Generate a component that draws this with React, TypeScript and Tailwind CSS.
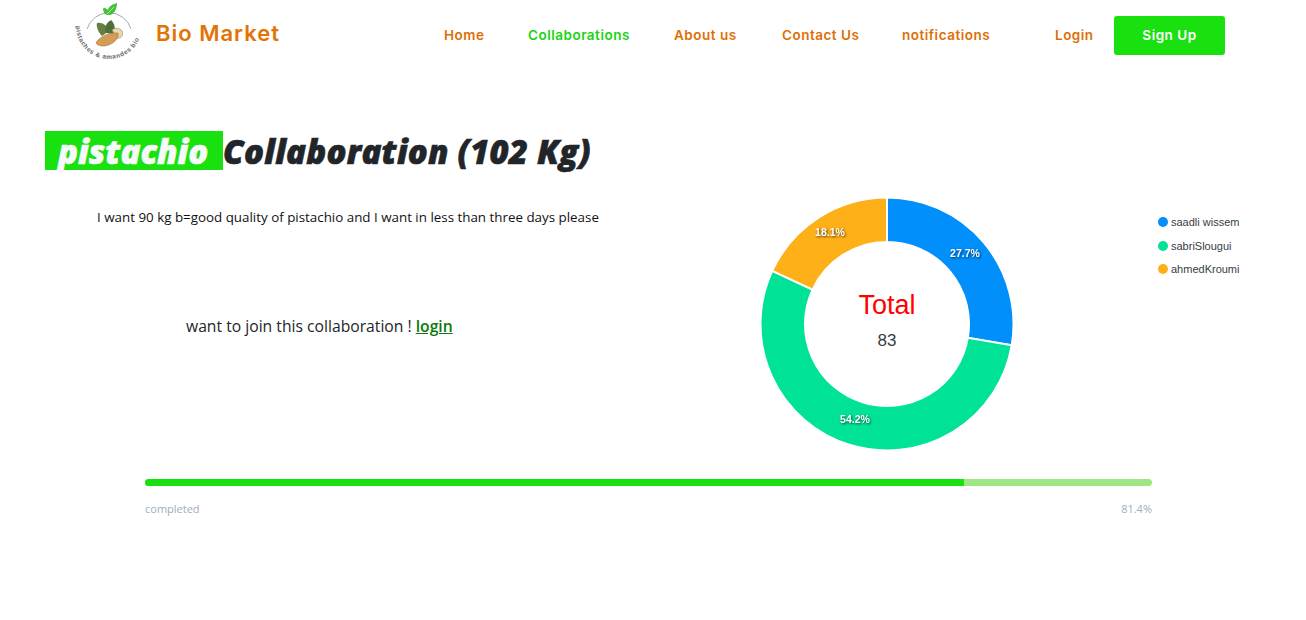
import React from "react";

const cx = 127, cy = 127, R = 126.5, r = 82;
function seg(a0: number, a1: number) {
  const p = (rad: number, a: number) => {
    const t = (a * 2 * Math.PI) - Math.PI / 2;
    return `${(cx + rad * Math.cos(t)).toFixed(2)} ${(cy + rad * Math.sin(t)).toFixed(2)}`;
  };
  const large = a1 - a0 > 0.5 ? 1 : 0;
  return `M${p(R, a0)}A${R} ${R} 0 ${large} 1 ${p(R, a1)}L${p(r, a1)}A${r} ${r} 0 ${large} 0 ${p(r, a0)}Z`;
}

function Logo() {
  return (
    <svg width="68" height="62" viewBox="0 0 68 62" className="shrink-0">
      <path d="M12 28A23 23 0 0 1 56 28" fill="none" stroke="#a8a8a8" strokeWidth="1" />
      <path d="M30 13C27 9 28 6 30 7L33 9C34 5 38 3 42 2C42 8 39 13 35 14C33 14 31 14 30 13Z" fill="#45c03a" />
      <path d="M32 13L39 6" stroke="#d8f5d0" strokeWidth="0.8" />
      <path d="M27 35C23 31 21 25 22 22C27 21 32 24 34 30Z" fill="#66803f" />
      <path d="M31 32C29 27 31 22 36 19C40 23 41 28 38 33Z" fill="#4f6e38" />
      <path d="M37 29C40 26 45 27 47 30C49 34 46 38 42 37Z" fill="#e6d8ae" stroke="#8a8a5a" strokeWidth="0.6" />
      <path d="M21 42C23 37 33 31 43 32C45 38 36 45 28 45C25 45 22 44 21 42Z" fill="#d49c55" stroke="#a87436" strokeWidth="0.6" />
      <path id="logoArc" d="M1 25A33 33 0 0 0 67 25" fill="none" />
      <text fontFamily="'Liberation Sans', sans-serif" fontSize="6.4" fontWeight="700" fill="#666" letterSpacing="0.6">
        <textPath href="#logoArc">pistaches &amp; amandes bio</textPath>
      </text>
    </svg>
  );
}

const navFont = "font-['Inter',sans-serif] text-[13.5px] font-semibold leading-none tracking-[0.5px]";

export default function App() {
  return (
    <div className="w-[1306px] h-[620px] bg-white overflow-hidden font-['Open_Sans','Noto_Sans',sans-serif]">
      <header className="flex items-start h-[70px]">
        <div className="ml-[75px] mt-[1px]"><Logo /></div>
        <div className="ml-[13px] mt-[19px] w-[240px] font-['Inter',sans-serif] text-[22px] font-semibold leading-[28px] tracking-[1px] text-[#e27405]">Bio Market</div>
        <nav className="flex items-center mt-[16px] h-[39px]">
          <a className={`${navFont} text-[#de6f05] ml-[48px] w-[84px]`}>Home</a>
          <a className={`${navFont} text-[#18d511] w-[146px]`}>Collaborations</a>
          <a className={`${navFont} text-[#de6f05] w-[108px]`}>About us</a>
          <a className={`${navFont} text-[#de6f05] w-[120px]`}>Contact Us</a>
          <a className={`${navFont} text-[#de6f05] w-[153px]`}>notifications</a>
          <a className={`${navFont} text-[#de6f05] w-[59px]`}>Login</a>
          <button className={`${navFont} w-[111px] h-[39px] rounded-[3px] bg-[#18e10f] text-white`}>Sign Up</button>
        </nav>
      </header>

      <main>
        <h1 className="mt-[61px] ml-[45px] flex items-start h-[39px] text-[33px] leading-[41px] font-black italic text-[#212529] [-webkit-text-stroke:0.6px_currentColor]">
          <span className="w-[178px] h-[39px] pl-[13px] bg-[#18e10f] text-[#f8f9fa]">pistachio</span>
          <span className="tracking-[0.2px] whitespace-nowrap">Collaboration (102 Kg)</span>
        </h1>

        <section className="flex items-start mt-[27px]">
          <div className="w-[760px] shrink-0">
            <p className="ml-[97px] mt-[10px] text-[13.37px] leading-[20px] text-[#111]">I want 90 kg b=good quality of pistachio and I want in less than three days please</p>
            <p className="ml-[186px] mt-[88px] text-[15.7px] leading-[22px] font-medium text-[#212529]">
              want to join this collaboration ! <a className="text-[#0a7a0a] font-semibold underline">login</a>
            </p>
          </div>
          <svg width="254" height="254" viewBox="0 0 254 254" className="shrink-0">
            <path d={seg(0, 0.277)} fill="#008ffb" stroke="#fff" strokeWidth="2" />
            <path d={seg(0.277, 0.819)} fill="#00e396" stroke="#fff" strokeWidth="2" />
            <path d={seg(0.819, 1)} fill="#feb019" stroke="#fff" strokeWidth="2" />
            <g fontFamily="'Liberation Sans', sans-serif" fontSize="10.5" fontWeight="700" fill="#fff" textAnchor="middle" style={{ filter: "drop-shadow(1px 1px 1px rgba(0,0,0,0.65))" }}>
              <text x="205" y="60">27.7%</text>
              <text x="95" y="226">54.2%</text>
              <text x="70" y="39">18.1%</text>
            </g>
            <text x="127" y="117" textAnchor="middle" fontFamily="'Liberation Sans', sans-serif" fontSize="27" fill="#ff0000">Total</text>
            <text x="127" y="149" textAnchor="middle" fontFamily="'Liberation Sans', sans-serif" fontSize="17" fill="#373d3f">83</text>
          </svg>
          <ul className="ml-[144px] mt-[18px] flex flex-col gap-[9px] font-['Liberation_Sans',sans-serif] text-[11px] leading-[14.5px] text-[#373d3f]">
            <li className="flex items-center gap-[3px]"><span className="w-[10px] h-[10px] rounded-full bg-[#008ffb]" />saadli wissem</li>
            <li className="flex items-center gap-[3px]"><span className="w-[10px] h-[10px] rounded-full bg-[#00e396]" />sabriSlougui</li>
            <li className="flex items-center gap-[3px]"><span className="w-[10px] h-[10px] rounded-full bg-[#feb019]" />ahmedKroumi</li>
          </ul>
        </section>

        <section className="ml-[145px] w-[1007px] mt-[28px]">
          <div className="h-[7px] rounded-full bg-[#9fe685] overflow-hidden">
            <div className="h-full bg-[#18e10f]" style={{ width: "81.3%" }} />
          </div>
          <div className="flex justify-between mt-[15px] text-[11px] leading-[16px] text-[#a0aec0]">
            <span>completed</span>
            <span>81.4%</span>
          </div>
        </section>
      </main>
    </div>
  );
}
